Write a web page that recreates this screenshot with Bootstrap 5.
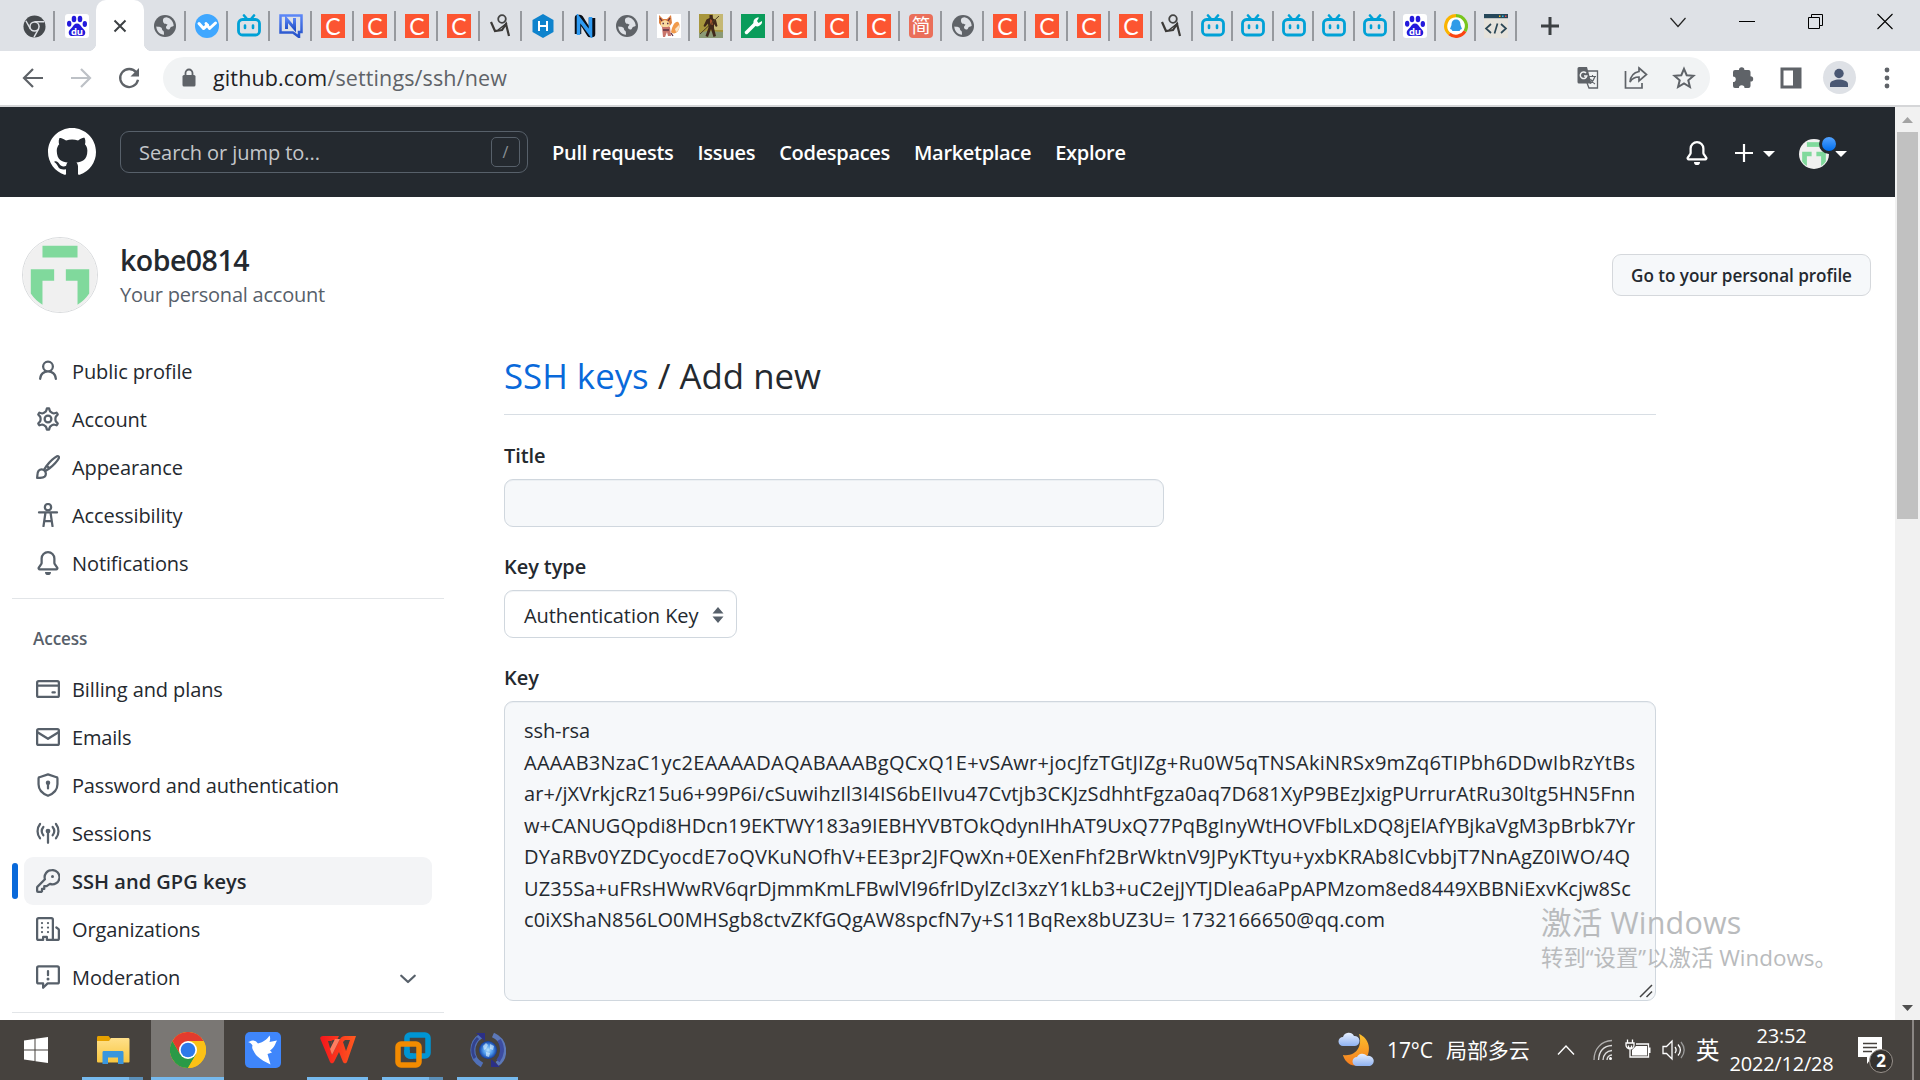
<!DOCTYPE html>
<html lang="en">
<head>
<meta charset="utf-8">
<title>Add new SSH keys</title>
<meta name="viewport" content="width=device-width, initial-scale=1">
<link href="https://cdn.jsdelivr.net/npm/bootstrap@5.3.0/dist/css/bootstrap.min.css" rel="stylesheet">
<style>
body{font-family:"Open Sans","Noto Sans CJK SC",sans-serif;font-size:20px;line-height:30px;color:#24292f;letter-spacing:-.004em}
svg{display:block;flex:none}
.oct{width:24px;height:24px;fill:#57606a;color:#57606a;margin-top:-1px}
.ln{fill:none;stroke:currentColor;stroke-width:1.5;stroke-linecap:round;stroke-linejoin:round}
/* browser chrome */
.tabstrip{height:51px;background:#dee1e6}
.tab{height:30px;margin-top:11px;width:42px;border-right:2px solid #96999e;flex:none;padding-left:2px}
.tab.narrow{width:40.5px}
.tab.first{width:55px;padding-left:16px}
.tab.plain{border-color:transparent;width:41px;padding-left:4px}
.fav{width:24px;height:24px;text-align:center}
.fav-c{background:#fc5531;color:#fff;font-family:Lato,sans-serif;font-size:23px;line-height:24px}
.fav-jian{background:#ea6f5a;color:#fff;border-radius:4px;font-size:19px;line-height:24px}
.active-tab{width:48px;height:51px;background:#fff;border-radius:10px 10px 0 0;flex:none;position:relative}
.active-tab::before,.active-tab::after{content:"";position:absolute;bottom:0;width:8px;height:8px}
.active-tab::before{left:-8px;background:radial-gradient(circle at 0 0,transparent 8px,#fff 8.5px)}
.active-tab::after{right:-8px;background:radial-gradient(circle at 100% 0,transparent 8px,#fff 8.5px)}
.winctl{gap:53px;padding-right:27px;padding-top:11px}
.toolbar{height:56px;border-bottom:2px solid #d5d6d8;padding:6px 21px 7px 21px;background:#fff;color:#5f6368}
.omni{height:42px;width:1547px;border-radius:21px;background:#f1f3f4;padding:0 14px 0 17px}
.url{font-size:21.5px;letter-spacing:.006em;color:#5f6368;margin-left:15px}
.url b{font-weight:400;color:#202124}
.person{width:33px;height:33px;background:#dee1e6;margin:0 -4.5px}
/* page */
.viewport{height:913px}
.gh{height:90px;background:#24292f;color:#fff;padding:0 48px;font-weight:600;letter-spacing:-.0155em}
.gh-search{width:408px;height:42px;border:1px solid #57606a;border-radius:9px;margin:0 24px;padding:0 7px 0 18px;font-weight:400;color:#c4c7ca;letter-spacing:-.003em}
.gh-search>span:first-child,.gh nav{padding-top:1px}
.slash{width:29px;height:30px;border:1px solid #57606a;border-radius:5px;font-size:16px;line-height:28px;color:#8b9096}
.gh a{color:#fff;text-decoration:none}
.caret{width:0;height:0;border:6px solid transparent;border-top-color:currentColor;border-bottom:0}
.ava-wrap{position:relative;width:30px;height:30px}
.dot{position:absolute;left:20px;top:-5px;width:20px;height:20px;border-radius:50%;border:3px solid #24292f;background:linear-gradient(#54a3ff,#006eed)}
.profile{padding:40px 24px 0 22px;height:116px}
.big-ava{border:1px solid #d9dbdd;border-radius:50%}
.uname{font-size:28.5px;line-height:38px;font-weight:600;letter-spacing:-.018em}
.usub{color:#57606a;letter-spacing:-.011em;padding-top:1px}
.btn-profile{background:#f6f8fa;border:1px solid #d5d8dc;border-radius:9px;font-size:17.1px;font-weight:600;width:259px;height:42px;padding:2px 0 0;color:#24292f;letter-spacing:-.002em}
.below{padding:34px 0 0 12px;gap:60px}
.side{width:432px;flex:none}
.side-link{height:48px;margin:0 12px;padding:1px 12px 0;gap:12px;border-radius:9px;position:relative;color:#24292f;letter-spacing:-.005em}
.side-link.long{letter-spacing:-.009em}
.side-link.on{background:#f3f4f6;font-weight:600;letter-spacing:.001em}
.side-link.on::before{content:"";position:absolute;left:-12px;top:6px;width:6px;height:36px;border-radius:9px;background:#0969da}
.rule{height:1px;background:#e2e5e8;margin-top:11px}
.side-head{font-size:17.1px;font-weight:600;color:#57606a;line-height:28px;margin:26px 0 12px 21px}
.main-col{width:1152px;flex:none}
.title-line{font-size:34.8px;line-height:54px;font-weight:400;padding:2px 0 11px;border-bottom:1px solid #d8dee4;margin:0;letter-spacing:0}
.title-line a{color:#0969da;text-decoration:none}
.lab{font-weight:600;line-height:32px;margin:0;display:block}
.box{background:#f6f8fa;border:1px solid #d0d7de;border-radius:9px;box-shadow:inset 0 1px 0 rgba(208,215,222,.25)}
.in-title{width:660px;height:48px}
.sel{width:233px;height:48px;background:#fff;padding:3px 11px 0 19px}
.key-area{height:300px;padding:13px 19px;line-height:31.5px;white-space:pre;position:relative}
.k1{letter-spacing:.0132em}.k2{letter-spacing:.0048em}.k3{letter-spacing:.0003em}.k4{letter-spacing:.0098em}.k5{letter-spacing:.0034em}.k6{letter-spacing:.0068em}
.grip{position:absolute;right:2px;bottom:2px}
.scroll{width:25px;background:#f1f1f1}
.thumb{width:21px;height:387px;background:#c1c1c1}
.water{position:absolute;left:1541px;top:793px;color:#b4b6b8;opacity:.92;white-space:nowrap}
.water div:first-child{font-size:30.5px;line-height:44px;letter-spacing:.006em}
.water div:last-child{font-size:22.4px;line-height:28px;letter-spacing:0}
/* taskbar */
.taskbar{height:60px;background:#46423e;color:#fff}
.app{width:75px;height:60px;position:relative;flex:none}
.app.start{width:75px;padding-right:3px}
.app.cur{background:#7a7774;width:73px;margin:0 1px}
.app.run::after{content:"";position:absolute;left:7px;right:7px;bottom:0;height:3px;background:#76b9ed}
.app.multi::after{background:linear-gradient(90deg,#76b9ed 47px,#5b8fb8 47px)}
.app.cur::after{left:0;right:0}
.tray{font-size:21px}
.clock{font-size:20px;line-height:28px;text-align:center;width:109px;letter-spacing:-.01em}
.badge-n{position:absolute;left:11px;top:12px;width:24px;height:24px;border-radius:50%;background:#35322f;border:1px solid #99928c;font-size:17px;font-weight:700;line-height:21px;text-align:center}
</style>
<script src="https://cdn.jsdelivr.net/npm/bootstrap@5.3.0/dist/js/bootstrap.bundle.min.js"></script>
</head>
<body class="vh-100 overflow-hidden d-flex flex-column">
<svg width="0" height="0" class="position-absolute">
<defs>
<linearGradient id="gn" x1="0" y1="0" x2="0" y2="1"><stop offset="0" stop-color="#5b86f7"/><stop offset="1" stop-color="#2350c8"/></linearGradient>
<linearGradient id="gw" x1="0" y1="0" x2="1" y2="0"><stop offset="0" stop-color="#f5151c"/><stop offset="1" stop-color="#ff5a1f"/></linearGradient>
<linearGradient id="gm" x1="0" y1="0" x2="0" y2="1"><stop offset="0" stop-color="#fbc02d"/><stop offset="1" stop-color="#f57c1f"/></linearGradient>
<linearGradient id="gcl" x1="0" y1="0" x2="0" y2="1"><stop offset="0" stop-color="#e6efff"/><stop offset="1" stop-color="#8fb2f0"/></linearGradient>
<linearGradient id="gf" x1="0" y1="0" x2="0" y2="1"><stop offset="0" stop-color="#ffe08a"/><stop offset="1" stop-color="#f8c63f"/></linearGradient>
<radialGradient id="gb"><stop offset="0" stop-color="#b8e4ff"/><stop offset=".55" stop-color="#4a96ea"/><stop offset="1" stop-color="#123a9c"/></radialGradient>
<symbol id="globe" viewBox="0 0 24 24"><circle cx="12" cy="12" r="11" fill="#5f6368"/><path d="M3.300 12.500c2.200.2 4.200.3 5.200 1.300.8.900.2 2 1.200 2.700 1.400.5 1.300 2 1.300 4.300-4.300-.4-7.700-3.900-7.700-8.300zM10.200 5c.5-1 1.800-1.700 3.300-1.800 4 .8 7 4.300 7.200 8.500-.8 1-1.900.6-2.900 1.300-.8.800-.5 2-1.800 2.400-1.500.4-2.800-.4-3-1.800-.2-1.500 1.200-1.800 1.500-3-.8-1-2.200-.4-3.300-1.200-1.300-1.100-1.500-3.200-1-4.400z" fill="#dee1e6"/></symbol>
<symbol id="bili" viewBox="0 0 24 24"><path d="M7 1.500l3 3.500M17 1.500L14 5" stroke="#00a1d6" stroke-width="2.600" stroke-linecap="round"/><rect x="1.500" y="5.500" width="21" height="15.500" rx="4" fill="none" stroke="#00a1d6" stroke-width="2.800"/><path d="M8 11.500v2.500M16 11.500v2.500" stroke="#00a1d6" stroke-width="2.600" stroke-linecap="round"/></symbol>
<symbol id="baidu" viewBox="0 0 24 24"><rect width="24" height="24" rx="3" fill="#fff"/><g fill="#2319dc"><ellipse cx="9" cy="5" rx="2.300" ry="3.200"/><ellipse cx="15" cy="5" rx="2.300" ry="3.200"/><ellipse cx="4.200" cy="9.800" rx="2.200" ry="3"/><ellipse cx="19.800" cy="10" rx="2.200" ry="3"/><path d="M12 9.500c2.500 0 3.500 2.200 5 4s3.500 3 3.300 5.500c-.3 2.700-2.800 3.300-4.500 3-2.500-.4-5-.4-7.500 0-1.800.3-4.300-.3-4.600-3-.2-2.500 1.800-3.700 3.300-5.500s2.500-4 5-4z"/></g><text x="12" y="20.500" text-anchor="middle" font-size="9.500" font-weight="700" fill="#fff">du</text></symbol>
<symbol id="stick" viewBox="0 0 24 24"><circle cx="13" cy="5" r="3.800" fill="none" stroke="#444" stroke-width="1.800"/><path d="M2 8l4 9 7-1 4-6 3 12" fill="none" stroke="#3c3a38" stroke-width="2.200"/><path d="M9 16L18 9" stroke="#3c3a38" stroke-width="1.500"/></symbol>
<symbol id="ava" viewBox="0 0 76 76"><circle cx="38" cy="38" r="38" fill="#f0f0f0"/><g fill="#80d99c"><path d="M20 8h36v12H20z"/><path d="M8 32h24v12H20v24.500A38 38 0 0 1 8 57z"/><path d="M44 32h24v25a38 38 0 0 1-12 11.500V44H44z"/></g></symbol>
<symbol id="bell" viewBox="0 0 16 16"><path fill-rule="evenodd" d="M8 16a2 2 0 001.985-1.750c.017-.137-.097-.25-.235-.25h-3.500c-.138 0-.252.113-.235.25A2 2 0 008 16zM3 5a5 5 0 0110 0v2.947c0 .05.015.098.042.139l1.703 2.555A1.518 1.518 0 0113.482 13H2.518a1.518 1.518 0 01-1.263-2.360l1.703-2.554A.25.25 0 003 7.947V5zm5-3.500A3.500 3.500 0 004.500 5v2.947c0 .346-.102.683-.294.970l-1.703 2.556a.018.018 0 00.015.027h10.964a.018.018 0 00.015-.027l-1.703-2.554a1.750 1.750 0 01-.294-.972V5A3.500 3.500 0 008 1.500z"/></symbol>
</defs>
</svg>

<!-- Tab strip -->
<div class="tabstrip d-flex flex-shrink-0">
  <div class="tab first d-flex align-items-center justify-content-center"><svg width="23" height="23" viewBox="0 0 24 24"><circle cx="12" cy="12" r="11.500" fill="#45494d"/><path d="M12 7h10M7.700 14.500L3 6M16.300 14.500L11.500 23" stroke="#dee1e6" stroke-width="1.500"/><circle cx="12" cy="12" r="5.500" fill="#dee1e6"/><circle cx="12" cy="12" r="3.900" fill="#45494d"/></svg></div>
  <div class="tab plain d-flex align-items-center justify-content-center"><svg class="fav"><use href="#baidu"/></svg></div>
  <div class="active-tab d-flex align-items-center justify-content-center"><svg width="14" height="14" viewBox="0 0 14 14"><path d="M1.500 1.500l11 11M12.500 1.500l-11 11" stroke="#3c4043" stroke-width="2"/></svg></div>
  <div class="tab d-flex align-items-center justify-content-center"><svg class="fav"><use href="#globe"/></svg></div>
  <div class="tab d-flex align-items-center justify-content-center"><svg class="fav" viewBox="0 0 24 24"><circle cx="12" cy="12" r="12" fill="#3fa7ff"/><path d="M4 9.500l4.500 5 4-3.500" fill="none" stroke="#fff" stroke-width="3" stroke-linejoin="round" stroke-linecap="round"/><path d="M11 9.500l3.500 5 6-5.500" fill="none" stroke="#fff" stroke-width="3" stroke-linejoin="round" stroke-linecap="round"/></svg></div>
  <div class="tab d-flex align-items-center justify-content-center"><svg class="fav"><use href="#bili"/></svg></div>
  <div class="tab d-flex align-items-center justify-content-center"><svg class="fav" viewBox="0 0 24 24"><path d="M22.500 1.500h-21v17H14l6 4.500v-5h2.500z" fill="none" stroke="url(#gn)" stroke-width="2.500"/><path d="M7.500 15V5l8 9.500V4" fill="none" stroke="url(#gn)" stroke-width="3"/></svg></div>
  <div class="tab d-flex align-items-center justify-content-center"><div class="fav fav-c">C</div></div>
  <div class="tab d-flex align-items-center justify-content-center"><div class="fav fav-c">C</div></div>
  <div class="tab d-flex align-items-center justify-content-center"><div class="fav fav-c">C</div></div>
  <div class="tab d-flex align-items-center justify-content-center"><div class="fav fav-c">C</div></div>
  <div class="tab d-flex align-items-center justify-content-center"><svg class="fav"><use href="#stick"/></svg></div>
  <div class="tab d-flex align-items-center justify-content-center"><svg class="fav" viewBox="0 0 24 24"><path d="M12 0l10.500 6v12L12 24 1.500 18V6z" fill="#0e83cd"/><path d="M8 7v10M16 7v10M8 12h8" stroke="#fff" stroke-width="2"/></svg></div>
  <div class="tab d-flex align-items-center justify-content-center"><svg class="fav" viewBox="0 0 24 24"><path d="M5 20V4h2l10 16h2V4" fill="none" stroke="#0b0f16" stroke-width="6.500" stroke-linejoin="round"/><path d="M5.500 21V4l12 16V3" fill="none" stroke="#2f9cf4" stroke-width="3.600"/></svg></div>
  <div class="tab d-flex align-items-center justify-content-center"><svg class="fav"><use href="#globe"/></svg></div>
  <div class="tab d-flex align-items-center justify-content-center"><svg class="fav" viewBox="0 0 24 24"><path fill="#fff" d="M0 0h24v24H0z"/><path d="M15 14c2-5 4-7 6-6s2 6 0 9-6 3-7 1z" fill="#f19a4a"/><path d="M18 15l4-4c1 3-1 6-3 7z" fill="#fbe3c4"/><path d="M2 1l4 4h4l4-4 1 8-3 4H5L2 9z" fill="#dd8040"/><path d="M4 8l4-2 4 2 1 4-5 2-4-2z" fill="#f9d9a0"/><path d="M5 13h8l1 9h-3l-1-4-2 5H6z" fill="#c9746b"/><path d="M3 4l2 3M13 4l-2 3M5.500 9.500h1.500M10 9.500h1.500M6 16h6M14 19l2 3" stroke="#5d3046" stroke-width="1.300"/></svg></div>
  <div class="tab d-flex align-items-center justify-content-center"><svg class="fav" viewBox="0 0 24 24"><path fill="#a8963c" d="M0 0h24v24H0z"/><path d="M14 0h10v16H14z" fill="#c5b874"/><path d="M0 19l8-2 16 1v6H0z" fill="#8b9a76"/><path d="M10.500 1h3l.5 3.500 3 1.500 1.500 6-1.500 1-2-3v4l2 8-2.500 1-2.500-8-3 8-2.500-1 3-8.500-.5-4-3 3.500-1.500-1 3-6.500 3-1.500z" fill="#40281a"/><path d="M11 5l2 1 1 5-3-1z" fill="#a0522d"/><path d="M1 20L20 2" stroke="#4f3e22" stroke-width="1"/></svg></div>
  <div class="tab d-flex align-items-center justify-content-center"><svg class="fav" viewBox="0 0 24 24"><path fill="#0a9c5b" d="M0 0h24v24H0z"/><path d="M5.500 18.500L14 10" stroke="#fff" stroke-width="3.500" stroke-linecap="round"/><path d="M18 3.500c-3-.5-6 2-5.500 5.500.5 3 3.500 4 5.500 3s3.500-3 3-5l-3.500 2-1.500-2z" fill="#fff"/></svg></div>
  <div class="tab d-flex align-items-center justify-content-center"><div class="fav fav-c">C</div></div>
  <div class="tab d-flex align-items-center justify-content-center"><div class="fav fav-c">C</div></div>
  <div class="tab d-flex align-items-center justify-content-center"><div class="fav fav-c">C</div></div>
  <div class="tab d-flex align-items-center justify-content-center"><div class="fav fav-jian">简</div></div>
  <div class="tab d-flex align-items-center justify-content-center"><svg class="fav"><use href="#globe"/></svg></div>
  <div class="tab d-flex align-items-center justify-content-center"><div class="fav fav-c">C</div></div>
  <div class="tab d-flex align-items-center justify-content-center"><div class="fav fav-c">C</div></div>
  <div class="tab d-flex align-items-center justify-content-center"><div class="fav fav-c">C</div></div>
  <div class="tab d-flex align-items-center justify-content-center"><div class="fav fav-c">C</div></div>
  <div class="tab narrow d-flex align-items-center justify-content-center"><svg class="fav"><use href="#stick"/></svg></div>
  <div class="tab narrow d-flex align-items-center justify-content-center"><svg class="fav"><use href="#bili"/></svg></div>
  <div class="tab narrow d-flex align-items-center justify-content-center"><svg class="fav"><use href="#bili"/></svg></div>
  <div class="tab narrow d-flex align-items-center justify-content-center"><svg class="fav"><use href="#bili"/></svg></div>
  <div class="tab narrow d-flex align-items-center justify-content-center"><svg class="fav"><use href="#bili"/></svg></div>
  <div class="tab narrow d-flex align-items-center justify-content-center"><svg class="fav"><use href="#bili"/></svg></div>
  <div class="tab narrow d-flex align-items-center justify-content-center"><svg class="fav"><use href="#baidu"/></svg></div>
  <div class="tab narrow d-flex align-items-center justify-content-center"><svg class="fav" viewBox="0 0 24 24"><circle cx="12" cy="12" r="10.500" fill="#fff"/><g fill="none" stroke-width="3.200"><path d="M5.500 20A10.400 10.400 0 0 1 12 1.600" stroke="#fbb400"/><path d="M12 1.600a10.400 10.400 0 0 1 9 15.600" stroke="#79c61e"/><path d="M21 17.200a10.400 10.400 0 0 1-15.500 2.800" stroke="#fb4410"/></g><path d="M12 5.500c3.500 0 4.500 2.500 4.500 5.500l1.500 4-1.500.5-1 1.500h-7l-1-1.500L6 15l1.500-4c0-3 1-5.500 4.500-5.500z" fill="#2f9be8"/></svg></div>
  <div class="tab narrow d-flex align-items-center justify-content-center"><svg class="fav" viewBox="0 0 24 24"><path d="M0 0h24v24H0z" fill="#e6e3dc"/><path d="M0 0h24v4.200H0z" fill="#25475a"/><path d="M15 1.500h1.500v1.500H15z" fill="#f9c22e"/><path d="M18 1.500h1.500v1.500H18z" fill="#30b8e0"/><path d="M21 1.500h1.500v1.500H21z" fill="#ef4a4a"/><path d="M7 10l-5 4.500L7 19M17 10l5 4.500L17 19M13.500 9.500l-3 10" fill="none" stroke="#2b4756" stroke-width="1.700"/></svg></div>
  <div class="d-flex align-items-center" style="padding-left:24px"><svg width="18" height="18" viewBox="0 0 18 18"><path d="M9 0v18M0 9h18" stroke="#3c4043" stroke-width="3"/></svg></div>
  <div class="winctl ms-auto d-flex">
    <svg width="16" height="20" viewBox="0 0 16 20"><path d="M.5 7L8 15.500 15.500 7" fill="none" stroke="#222" stroke-width="1.200"/></svg>
    <svg width="16" height="20" viewBox="0 0 16 20"><path d="M0 10.500h16" stroke="#000" stroke-width="1"/></svg>
    <svg width="16" height="20" viewBox="0 0 16 20"><path d="M.5 6.500h11v11H.5zM3.500 6V3.500h11v11H12" fill="none" stroke="#000"/></svg>
    <svg width="16" height="20" viewBox="0 0 16 20"><path d="M.5 3l15 15M15.500 3l-15 15" stroke="#000" stroke-width="1.100"/></svg>
  </div>
</div>

<!-- Toolbar -->
<div class="toolbar d-flex align-items-center flex-shrink-0">
  <div class="d-flex align-items-center" style="gap:24px;width:142px">
    <svg width="24" height="24" viewBox="0 0 24 24"><path d="M12 3l-9 9 9 9M3 12h19" fill="none" stroke="#5f6368" stroke-width="2.200"/></svg>
    <svg width="24" height="24" viewBox="0 0 24 24"><path d="M12 3l9 9-9 9M21 12H2" fill="none" stroke="#bdc1c6" stroke-width="2.200"/></svg>
    <svg width="24" height="24" viewBox="0 0 24 24"><path d="M19.300 6.500A9 9 0 1 0 21 13.800" fill="none" stroke="#5f6368" stroke-width="2.300"/><path d="M22 2v8.500h-8.500z" fill="#5f6368"/></svg>
  </div>
  <div class="omni d-flex align-items-center">
    <svg width="18" height="20" viewBox="0 0 18 20"><rect x="2.500" y="7" width="13" height="11.500" rx="1.500" fill="#5f6368"/><path d="M5.500 8V5a3.500 3.500 0 0 1 7 0v3" fill="none" stroke="#5f6368" stroke-width="1.800"/></svg>
    <div class="url"><b>github.com</b>/settings/ssh/new</div>
    <div class="ms-auto d-flex align-items-center" style="gap:24px">
      <svg width="24" height="24" viewBox="0 0 24 24"><path d="M10 5h11.500v17H13l-2-5" fill="none" stroke="#5f6368" stroke-width="1.300"/><path d="M3 1h8l4.500 16.500H3a1.500 1.500 0 0 1-1.500-1.500V2.500A1.500 1.500 0 0 1 3 1z" fill="#5f6368"/><path d="M10 7a3.300 3.300 0 1 0 .8 3H8" fill="none" stroke="#f1f3f4" stroke-width="1.500"/><path d="M13 10.500h7M16.500 9v1.500M19 10.500c-.8 3-2.500 5-5 7M14.500 13c1 2.500 2.500 4 4.500 5" fill="none" stroke="#5f6368" stroke-width="1.200"/></svg>
      <svg width="24" height="24" viewBox="0 0 24 24"><path d="M1.500 5v17h16.500v-5" fill="none" stroke="#5f6368" stroke-width="1.700"/><path d="M15 2l7.500 6.500L15 15v-4c-4 0-7 1.500-9 5 .5-6 3.500-9.500 9-10.500z" fill="none" stroke="#5f6368" stroke-width="1.700"/></svg>
      <svg width="24" height="24" viewBox="0 0 24 24"><path d="M12 2.800l2.700 6.400 6.800.6-5.200 4.500 1.600 6.700-5.900-3.600L6.100 21l1.600-6.700-5.200-4.500 6.800-.6z" fill="none" stroke="#5f6368" stroke-width="2"/></svg>
    </div>
  </div>
  <div class="ms-auto d-flex align-items-center" style="gap:24px">
    <svg width="24" height="24" viewBox="0 0 24 24"><path d="M2 6a2 2 0 0 1 2-2h4a2.700 2.700 0 1 1 5.400 0h4.100a2 2 0 0 1 2 2v4.200a2.700 2.700 0 1 1 0 5.400V20a2 2 0 0 1-2 2h-4a2.800 2.800 0 1 0-5.600 0H4a2 2 0 0 1-2-2v-4a2.800 2.800 0 1 0 0-5.600z" fill="#5f6368"/></svg>
    <svg width="24" height="24" viewBox="0 0 24 24"><path d="M1.500 1.500h21v21h-21zm3 3v15H14v-15z" fill="#5f6368" fill-rule="evenodd"/></svg>
    <div class="person rounded-circle d-flex align-items-center justify-content-center"><svg width="20" height="20" viewBox="0 0 20 20" fill="#4a5873"><circle cx="10" cy="5.500" r="4.700"/><path d="M1 19v-3c0-3 5-4.500 9-4.500s9 1.500 9 4.500v3z"/></svg></div>
    <svg width="24" height="24" viewBox="0 0 24 24" fill="#5f6368"><circle cx="12" cy="4" r="2.400"/><circle cx="12" cy="12" r="2.400"/><circle cx="12" cy="20" r="2.400"/></svg>
  </div>
</div>

<!-- Page -->
<div class="viewport d-flex flex-shrink-0 position-relative overflow-hidden">
  <div class="flex-grow-1 overflow-hidden">
    <header class="gh d-flex align-items-center">
      <svg width="48" height="48" viewBox="0 0 16 16" fill="#fff"><path d="M8 0C3.580 0 0 3.580 0 8c0 3.540 2.290 6.530 5.470 7.590.4.07.55-.17.55-.38 0-.19-.01-.82-.01-1.490-2.010.37-2.530-.49-2.690-.94-.09-.23-.48-.94-.82-1.130-.28-.15-.68-.52-.01-.53.63-.01 1.080.58 1.230.82.72 1.210 1.870.87 2.330.66.07-.52.28-.87.51-1.070-1.780-.2-3.640-.89-3.640-3.950 0-.87.31-1.590.82-2.150-.08-.2-.36-1.020.08-2.120 0 0 .67-.21 2.200.82.64-.18 1.320-.27 2-.27.68 0 1.360.09 2 .27 1.530-1.040 2.200-.82 2.200-.82.44 1.100.16 1.920.08 2.120.51.56.82 1.270.82 2.150 0 3.070-1.870 3.750-3.650 3.950.29.25.54.73.54 1.480 0 1.070-.01 1.930-.01 2.200 0 .21.15.46.55.38A8.013 8.013 0 0016 8c0-4.420-3.580-8-8-8z"/></svg>
      <div class="gh-search d-flex align-items-center justify-content-between"><span>Search or jump to...</span><span class="slash text-center">/</span></div>
      <nav class="d-flex" style="gap:24px"><a href="#">Pull requests</a><a href="#">Issues</a><a href="#">Codespaces</a><a href="#">Marketplace</a><a href="#">Explore</a></nav>
      <div class="ms-auto d-flex align-items-center">
        <svg style="margin-top:1px" width="24" height="24" fill="#fff"><use href="#bell"/></svg>
        <svg style="margin:2px 0 0 23px" width="24" height="24" viewBox="0 0 24 24"><path d="M12 3v18M3 12h18" stroke="#fff" stroke-width="2.200"/></svg>
        <span class="caret" style="margin:4px 24px 0 7px"></span>
        <div class="ava-wrap mt-1"><svg width="30" height="30"><use href="#ava"/></svg><span class="dot"></span></div>
        <span class="caret" style="margin:4px 0 0 6px"></span>
      </div>
    </header>
    <div class="profile d-flex align-items-center">
      <svg class="big-ava" width="76" height="76"><use href="#ava"/></svg>
      <div style="margin-left:22px"><div class="uname">kobe0814</div><div class="usub">Your personal account</div></div>
      <button class="btn btn-profile ms-auto">Go to your personal profile</button>
    </div>
    <div class="below d-flex">
      <nav class="side">
        <div class="side-link d-flex align-items-center"><svg class="oct" viewBox="0 0 16 16"><path d="M10.500 5a2.500 2.500 0 11-5 0 2.500 2.500 0 015 0zm.061 3.073a4 4 0 10-5.123 0 6.004 6.004 0 00-3.431 5.142.75.75 0 001.498.07 4.500 4.500 0 018.990 0 .75.75 0 101.498-.07 6.005 6.005 0 00-3.432-5.142z"/></svg>Public profile</div>
        <div class="side-link d-flex align-items-center"><svg class="oct" viewBox="0 0 16 16"><g class="ln"><circle cx="8" cy="8" r="2.250"/><path transform="translate(8 8) scale(1.100) translate(-8 -8)" stroke-width="1.360" d="M7.429 1.525a6.593 6.593 0 011.142 0c.036.003.108.036.137.146l.289 1.105c.147.56.55.967.997 1.189.174.086.341.183.501.29.417.278.970.423 1.530.27l1.102-.303c.11-.03.175.016.195.046.219.31.41.641.573.989.014.031.022.11-.059.19l-.815.806c-.411.406-.562.957-.53 1.456a4.588 4.588 0 010 .582c-.032.499.119 1.050.53 1.456l.815.806c.08.08.073.159.059.19a6.494 6.494 0 01-.573.990c-.02.029-.086.074-.195.045l-1.103-.303c-.559-.153-1.112-.008-1.529.27-.16.107-.327.204-.5.29-.449.222-.851.628-.998 1.189l-.289 1.105c-.029.11-.101.143-.137.146a6.613 6.613 0 01-1.142 0c-.036-.003-.108-.037-.137-.146l-.289-1.105c-.147-.56-.55-.967-.997-1.189a4.502 4.502 0 01-.501-.29c-.417-.278-.970-.423-1.530-.27l-1.102.303c-.11.03-.175-.016-.195-.046a6.492 6.492 0 01-.573-.989c-.014-.031-.022-.11.059-.19l.815-.806c.411-.406.562-.957.53-1.456a4.587 4.587 0 010-.582c.032-.499-.119-1.050-.53-1.456l-.815-.806c-.08-.08-.073-.159-.059-.19a6.440 6.440 0 01.573-.990c.02-.029.086-.075.195-.045l1.103.303c.559.153 1.112.008 1.529-.27.16-.107.327-.204.5-.29.449-.222.851-.628.998-1.189l.289-1.105c.029-.11.101-.143.137-.146z"/></g></svg>Account</div>
        <div class="side-link d-flex align-items-center"><svg class="oct" viewBox="0 0 16 16"><g class="ln" stroke-width="1.400"><path d="M.75 15.250c.3-1.600-.1-3.400 1-4.700 1.100-1.200 2.900-1.200 4-.1s1.100 3 0 4c-1.300 1.100-3.300.8-5 .8z"/><path d="M5.300 9.900L7 7.300C9 4.800 11.600 2.200 14 .9c.9-.4 1.600.3 1.200 1.200C14 4.400 11.300 7 8.800 9L6.200 10.800M7.200 7.200l1.700 1.700"/></g></svg>Appearance</div>
        <div class="side-link d-flex align-items-center"><svg class="oct" viewBox="0 0 16 16"><g class="ln" stroke-width="1.400"><circle cx="8" cy="2.750" r="2.100"/><path d="M2 6.250h12M6.300 6.500L5 15.400M9.700 6.500L11 15.400M5.700 12h4.600"/></g></svg>Accessibility</div>
        <div class="side-link d-flex align-items-center"><svg class="oct"><use href="#bell"/></svg>Notifications</div>
        <div class="rule"></div>
        <div class="side-head">Access</div>
        <div class="side-link d-flex align-items-center"><svg class="oct" viewBox="0 0 16 16"><g class="ln"><rect x=".75" y="2.750" width="14.500" height="10.500" rx="1"/><path d="M1 5.750h14" stroke-linecap="butt"/><path d="M11 10.250h1.500"/></g></svg>Billing and plans</div>
        <div class="side-link long d-flex align-items-center"><svg class="oct" viewBox="0 0 16 16"><g class="ln"><rect x=".75" y="2.750" width="14.500" height="10.500" rx="1"/><path d="M1 4.800l7 4.400 7-4.400"/></g></svg>Emails</div>
        <div class="side-link long d-flex align-items-center"><svg class="oct" viewBox="0 0 16 16"><path class="ln" d="M8 .95l5.700 1.850c.4.1.6.4.6.8V7.500c0 3.600-2.200 6.100-6.300 7.700-4.100-1.600-6.300-4.100-6.300-7.700V3.600c0-.4.2-.7.6-.8z"/><circle cx="8" cy="6.500" r="1.500"/><path class="ln" d="M8 7v3.300"/></svg>Password and authentication</div>
        <div class="side-link d-flex align-items-center"><svg class="oct" viewBox="0 0 16 16"><circle cx="8" cy="6.700" r="1.600"/><path class="ln" d="M8 7v7.500M4.900 4a4.400 4.400 0 0 0 0 5.500M11.100 4a4.400 4.400 0 0 1 0 5.500M2.700 2a7.600 7.600 0 0 0 0 9.500M13.300 2a7.600 7.600 0 0 1 0 9.500"/></svg>Sessions</div>
        <div class="side-link on d-flex align-items-center"><svg class="oct" viewBox="0 0 16 16"><path class="ln" d="M10.500.75a4.750 4.750 0 0 0-4.550 6.100L.9 11.900c-.1.100-.15.250-.15.400v2.400c0 .3.250.55.55.55h2.200l.5-.5v-1.500h1.500v-1.800h1.600L9.300 9.950A4.750 4.750 0 1 0 10.500.75z"/><circle cx="11" cy="5" r="1"/></svg>SSH and GPG keys</div>
        <div class="side-link d-flex align-items-center"><svg class="oct" viewBox="0 0 16 16"><path class="ln" d="M4.750 15.250h-3c-.6 0-1-.4-1-1V1.750c0-.6.4-1 1-1h8.500c.6 0 1 .4 1 1v13.500H7.250v-2h-2.500zM11.500 15.250h2.750c.6 0 1-.4 1-1V8.700c0-.3-.2-.6-.4-.8l-1.300-.9"/><g class="ln" stroke-dasharray="0 3"><path d="M4 4v6.100M8 4v6.100"/></g></svg>Organizations</div>
        <div class="side-link d-flex align-items-center"><svg class="oct" viewBox="0 0 16 16"><path class="ln" d="M1.750.95h12.500c.6 0 1 .4 1 1v9.300c0 .6-.4 1-1 1h-6.500l-3 2.900v-2.900h-3c-.6 0-1-.4-1-1v-9.300c0-.6.4-1 1-1zM8 4v2.800"/><circle cx="8" cy="9.300" r="1"/></svg>Moderation<svg class="ms-auto" width="24" height="24" viewBox="0 0 16 16" color="#57606a"><path class="ln" d="M3.500 6.500L8 10.700l4.500-4.200"/></svg></div>
        <div class="rule"></div>
      </nav>
      <main class="main-col">
        <h2 class="title-line"><a href="#">SSH keys</a> / Add new</h2>
        <label class="lab" style="margin:25px 0 7px">Title</label>
        <div class="box in-title"></div>
        <label class="lab" style="margin:24px 0 7px">Key type</label>
        <div class="box sel d-flex align-items-center justify-content-between"><span>Authentication Key</span><svg width="14" height="18" viewBox="0 0 14 18" fill="#57606a" style="margin-top:-2px"><path d="M7 1l5.500 6.500h-11zM7 17l5.500-6.500h-11z"/></svg></div>
        <label class="lab" style="margin:24px 0 7px">Key</label>
        <div class="box key-area d-flex flex-column"><span>ssh-rsa</span><span class="k1">AAAAB3NzaC1yc2EAAAADAQABAAABgQCxQ1E+vSAwr+jocJfzTGtJIZg+Ru0W5qTNSAkiNRSx9mZq6TIPbh6DDwIbRzYtBs</span><span class="k2">ar+/jXVrkjcRz15u6+99P6i/cSuwihzIl3I4IS6bEIIvu47Cvtjb3CKJzSdhhtFgza0aq7D681XyP9BEzJxigPUrrurAtRu30ltg5HN5Fnn</span><span class="k3">w+CANUGQpdi8HDcn19EKTWY183a9IEBHYVBTOkQdynIHhAT9UxQ77PqBgInyWtHOVFblLxDQ8jElAfYBjkaVgM3pBrbk7Yr</span><span class="k4">DYaRBv0YZDCyocdE7oQVKuNOfhV+EE3pr2JFQwXn+0EXenFhf2BrWktnV9JPyKTtyu+yxbKRAb8lCvbbjT7NnAgZ0IWO/4Q</span><span class="k5">UZ35Sa+uFRsHWwRV6qrDjmmKmLFBwlVl96frlDylZcI3xzY1kLb3+uC2ejJYTJDlea6aPpAPMzom8ed8449XBBNiExvKcjw8Sc</span><span class="k6">c0iXShaN856LO0MHSgb8ctvZKfGQgAW8spcfN7y+S11BqRex8bUZ3U= 1732166650@qq.com</span><svg class="grip" width="14" height="14" viewBox="0 0 14 14"><path d="M1 13L13 1M7.500 13L13 7.500" stroke="#444" stroke-width="1.500"/></svg></div>
      </main>
    </div>
  </div>
  <div class="scroll d-flex flex-column align-items-center flex-shrink-0">
    <svg width="25" height="25" viewBox="0 0 25 25"><path d="M7 16l5.500-6L18 16z" fill="#a3a3a3"/></svg>
    <div class="thumb"></div>
    <svg class="mt-auto" width="25" height="25" viewBox="0 0 25 25"><path d="M7 10l5.500 6L18 10z" fill="#505050"/></svg>
  </div>
  <div class="water"><div>激活 Windows</div><div>转到“设置”以激活 Windows。</div></div>
</div>

<!-- Taskbar -->
<footer class="taskbar d-flex flex-shrink-0">
  <div class="app start d-flex align-items-center justify-content-center"><svg width="24" height="26" viewBox="0 0 24 26" fill="#fff"><path d="M0 3.500L10.500 2v10.500H0zM11.500 1.800L24 0v12.500H11.500zM0 13.500h10.500V24L0 22.500zM11.500 13.500H24V26l-12.500-1.800z"/></svg></div>
  <div class="app run multi d-flex align-items-center justify-content-center"><svg width="34" height="30" viewBox="0 0 34 30"><path d="M1 2.500C1 1.500 1.500 1 2.500 1h10L15 4l-3 4H1z" fill="#e6a100"/><path d="M1 6h12l2-3h17c1 0 1.500.5 1.500 1.500v22c0 .6-.5 1-1 1h-30c-1 0-1.500-.5-1.500-1z" fill="url(#gf)"/><path d="M6.500 29V17.500c0-1 .5-1.500 1.500-1.500h18c1 0 1.500.5 1.500 1.500V29H22v-6.500H12V29z" fill="#3a96dd"/></svg></div>
  <div class="app cur run d-flex align-items-center justify-content-center"><svg width="36" height="36" viewBox="0 0 36 36"><circle cx="18" cy="18" r="18" fill="#fbc116"/><path d="M2.400 9A18 18 0 0 0 18 36l8-13.500L10 22z" fill="#2a9a47"/><path d="M2.400 9a18 18 0 0 1 31.200 0H18v6l-8 7z" fill="#e33b2e"/><path d="M33.600 9A18 18 0 0 1 18 36l8-13.500L24 9z" fill="#fbc116"/><circle cx="18" cy="18" r="9" fill="#fff"/><circle cx="18" cy="18" r="7.300" fill="#2d79ea"/></svg></div>
  <div class="app d-flex align-items-center justify-content-center"><svg width="36" height="36" viewBox="0 0 36 36"><rect width="36" height="36" rx="5" fill="#3f86fb"/><path d="M3 10c2-.5 3-2 5.500-1.500 2 .3 3 1.500 4.500 3 4-1 9-3.500 11.500-8 1 2 .8 4.500 0 6.500 2.500-.5 5-1 7.500-1.500-2 3-2 7-7 10l2 2-4.500 1.500 3 10.500C20 30 16 27.500 12 24c-2.500-2.500-2.500-4-4-6-1-1.500-1-3-.5-4.500C6.500 11.500 5 10.500 3 10z" fill="#fff"/></svg></div>
  <div class="app run d-flex align-items-center justify-content-center"><svg width="36" height="30" viewBox="0 0 36 30"><path d="M3 1h16l-6 12-2-7H8l4 14 8-16c1-2 3-3 5-3h11l-9 26c-.8 1.800-3 1.800-4 0l-4-10-5 10c-1 1.800-3 1.800-4 0L.4 4C-.2 2.500 1 1 3 1z" fill="url(#gw)"/><path d="M23 7l3 9 4-11h-5z" fill="#46423e"/><path d="M11 6l3 8 5-9h-6z" fill="#46423e"/><path d="M12 20l8-16h-5l-5 10z" fill="#ff7c60"/></svg></div>
  <div class="app run multi d-flex align-items-center justify-content-center"><svg width="36" height="36" viewBox="0 0 36 36"><g fill="none" stroke-width="5.500"><rect x="12" y="3" width="21" height="21" rx="3" stroke="#0095d3"/><rect x="3" y="12" width="21" height="21" rx="3" stroke="#f38b00"/><path d="M12 18v3a3 3 0 0 0 3 3h3" stroke="#0095d3"/></g></svg></div>
  <div class="app run d-flex align-items-center justify-content-center"><svg width="36" height="36" viewBox="0 0 36 36"><g fill="none" stroke-width="5"><path d="M12 33C-1 26 1 10 11 4" stroke="#5070b8"/><path d="M8 6C1 13 2 22 5 26" stroke="#33428c" stroke-width="3"/><path d="M23 3c14 6 13 23 4 29" stroke="#5c78b8"/><path d="M29 8c5 8 3 16-1 21" stroke="#3c4ca0" stroke-width="4"/></g><path d="M6 1h9v8z" fill="#2b2f86"/><path d="M30 35h-9v-8z" fill="#2b2f86"/><circle cx="18" cy="18" r="9" fill="url(#gb)"/><path d="M13 14l3-3 2 2-2 4-2 1zM20 12l4 2-1 4-3-1zM16 20l4 1-1 4-3-1z" fill="#e2f5ff" opacity=".6"/></svg></div>

  <div class="tray ms-auto d-flex align-items-center position-relative">
    <svg width="36" height="36" viewBox="0 0 36 36"><path d="M21 2c10 4 14 17 5 27-5 6-13 6-18 0-1-1-3-5-3-6C18 25 25 14 21 2z" fill="url(#gm)"/><g fill="url(#gcl)"><path d="M5 14a4.500 4.500 0 0 1 0-9 6 6 0 0 1 11-1 5 5 0 0 1 1 10z"/><path d="M19 34a4.500 4.500 0 0 1 0-9 6 6 0 0 1 10-1 5 5 0 0 1 3 10z"/></g></svg>
    <span style="margin-left:13px;width:59px">17°C</span><span style="width:111px">局部多云</span>
    <svg width="18" height="12" viewBox="0 0 18 12"><path d="M1 10.500L9 2l8 8.500" fill="none" stroke="#fff" stroke-width="1.400"/></svg>
    <svg style="margin-left:18px" width="20" height="22" viewBox="0 0 20 22"><g fill="none" stroke="#ddd" stroke-width="1.300"><path d="M1 21C1 10 8 2 19 1.500" opacity=".7"/><path d="M5.500 21C6 13 10 7 19 6.500M10 21c.5-5 3-9 9-9.500M14 21c0-2.500 2-5 5-5"/></g><circle cx="17.500" cy="19.500" r="1.500" fill="#fff"/></svg>
    <svg style="margin-left:12px;margin-top:-2px" width="26" height="20" viewBox="0 0 26 20"><path d="M3.500 6.500V9h3V6.500M2.500.5v3M7.500.5v3M1 4h8v2a4 4 0 0 1-8 0zM5 10v8h18.500V5H11" fill="none" stroke="#fff" stroke-width="1.300"/><path d="M7 11l4-4h11v9.500H7zM24 8.500h1.500V14H24z" fill="#fff"/></svg>
    <svg style="margin-left:11px" width="24" height="22" viewBox="0 0 24 22"><path d="M1 7.500h3.500L10 2v18l-5.500-5.500H1zM13 8c1.500 2 1.500 4 0 6M16 5.500c3 3.500 3 7.500 0 11" fill="none" stroke="#fff" stroke-width="1.300"/><path d="M19 3c4 5 4 11 0 16" fill="none" stroke="#999" stroke-width="1.300"/></svg>
    <span style="margin-left:10px;font-size:23.500px;width:31px">英</span>
    <div class="clock"><div>23:52</div><div>2022/12/28</div></div>
    <div class="position-relative" style="margin-left:22px;width:24px;height:26px"><svg width="24" height="28" viewBox="0 0 24 28"><path d="M0 0h24v20H14l-5 7v-7H0z" fill="#fff"/><path d="M5 6.500h14M5 10.500h14M5 14.500h9" stroke="#46423e" stroke-width="1.300"/></svg><span class="badge-n">2</span></div>
    <div class="h-100" style="width:2px;background:#8a8683;margin:0 6px 0 30px"></div>
  </div>
</footer>
</body>
</html>
